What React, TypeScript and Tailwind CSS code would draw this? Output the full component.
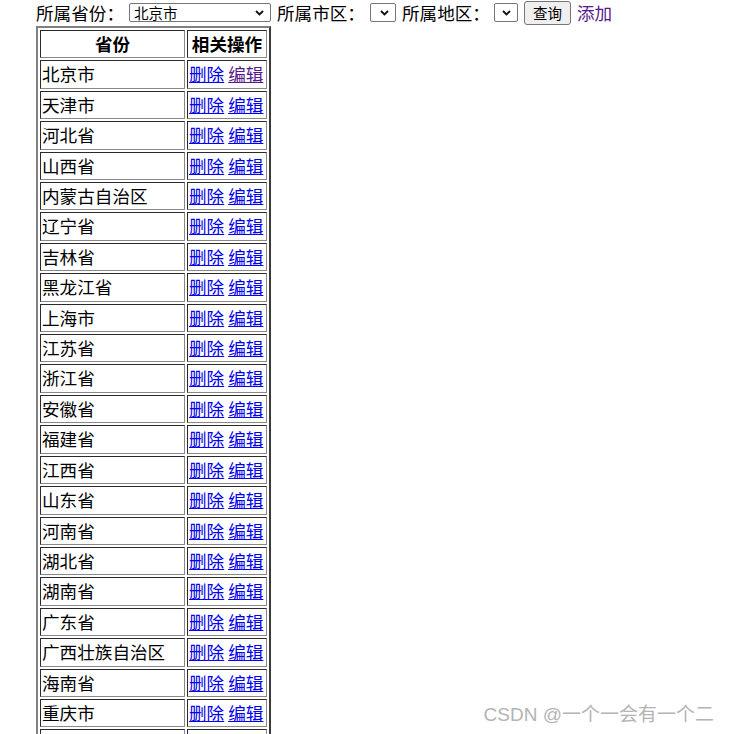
import React from "react";

const provinces = [
  "北京市", "天津市", "河北省", "山西省", "内蒙古自治区", "辽宁省", "吉林省", "黑龙江省",
  "上海市", "江苏省", "浙江省", "安徽省", "福建省", "江西省", "山东省", "河南省",
  "湖北省", "湖南省", "广东省", "广西壮族自治区", "海南省", "重庆市", "四川省", "贵州省",
];

function Chevron() {
  return (
    <svg width="9" height="6" viewBox="0 0 9 6" className="block">
      <polyline points="1,1 4.5,4.5 8,1" fill="none" stroke="#111" strokeWidth="1.8" />
    </svg>
  );
}

function FakeSelect({ w, label }: { w: string; label?: string }) {
  return (
    <div
      className={`${w} h-[19px] border border-[#767676] rounded-[2px] bg-white flex items-center justify-between pl-[4px] pr-[6px] text-[14.5px] leading-[17px] text-black`}
    >
      <span>{label ?? ""}</span>
      <Chevron />
    </div>
  );
}

export default function App() {
  return (
    <div
      className="relative h-[734px] overflow-hidden bg-white text-black"
      style={{ fontFamily: '"Noto Sans CJK SC", "Noto Sans", sans-serif' }}
    >
      <div className="flex items-center h-[25px] pl-[36px] text-[17.6px] leading-[24px]">
        <span>所属省份：</span>
        <div className="ml-[5px]">
          <FakeSelect w="w-[142px]" label="北京市" />
        </div>
        <span className="ml-[6px]">所属市区：</span>
        <div className="ml-[5px]">
          <FakeSelect w="w-[26px]" />
        </div>
        <span className="ml-[6px]">所属地区：</span>
        <div className="ml-[4px]">
          <FakeSelect w="w-[24px]" />
        </div>
        <button className="ml-[6px] w-[47px] h-[24px] border border-[#767676] rounded-[3px] bg-[#efefef] text-[14.5px] leading-[20px] text-black flex items-center justify-center">
          查询
        </button>
        <a className="ml-[6px] text-[#551A8B] no-underline cursor-pointer">添加</a>
      </div>

      <div className="pl-[36px]">
        <table
          className="border-separate border-spacing-x-[2px] border-spacing-y-[2px] mt-[1px] border-2 border-t-[#808080] border-l-[#808080] border-r-[#3a3a3a] border-b-[#3a3a3a] text-[17.6px] leading-[24.4px]"
        >
          <tbody>
            <tr>
              <th className="w-[145px] p-[1px] border border-t-[#2a2a2a] border-l-[#2a2a2a] border-r-[#888] border-b-[#888] font-bold text-center">
                省份
              </th>
              <th className="w-[80px] p-[1px] border border-t-[#2a2a2a] border-l-[#2a2a2a] border-r-[#888] border-b-[#888] font-bold text-center whitespace-nowrap">
                相关操作
              </th>
            </tr>
            {provinces.map((p, i) => (
              <tr key={p}>
                <td className="p-[1px] border border-t-[#2a2a2a] border-l-[#2a2a2a] border-r-[#888] border-b-[#888] text-left whitespace-nowrap">
                  {p}
                </td>
                <td className="p-[1px] border border-t-[#2a2a2a] border-l-[#2a2a2a] border-r-[#888] border-b-[#888] text-left whitespace-nowrap">
                  <a className="text-[#0000EE] underline cursor-pointer">删除</a>{" "}
                  <a className={`${i === 0 ? "text-[#551A8B]" : "text-[#0000EE]"} underline cursor-pointer`}>编辑</a>
                </td>
              </tr>
            ))}
          </tbody>
        </table>
      </div>

      <div
        className="absolute right-[15px] bottom-[7px] text-[19px] leading-[24px] text-[#b4b4b4] whitespace-nowrap"
        style={{ textShadow: "1px 1px 0 #fff", fontFamily: '"Liberation Sans", "Noto Sans CJK SC", sans-serif' }}
      >
        CSDN @一个一会有一个二
      </div>
    </div>
  );
}
